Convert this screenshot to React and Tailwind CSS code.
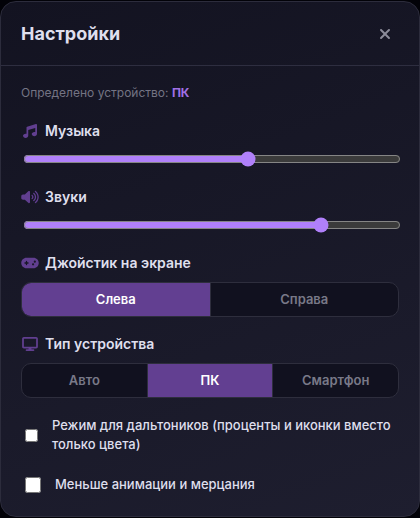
import { useState } from 'react';
import { FaMusic, FaVolumeHigh, FaGamepad, FaDisplay, FaXmark } from 'react-icons/fa6';

const JOYSTICK_SIDES = [
  { value: 'left', label: 'Слева' },
  { value: 'right', label: 'Справа' },
];

const DEVICE_TYPES = [
  { value: 'auto', label: 'Авто' },
  { value: 'pc', label: 'ПК' },
  { value: 'phone', label: 'Смартфон' },
];

function VolumeSlider({ id, icon: Icon, label, value, onChange }) {
  return (
    <div className="mb-5">
      <label htmlFor={id} className="flex items-center gap-1.5 h-5 mb-2.5 text-sm font-semibold">
        <Icon className="w-[18px] h-3.5 text-[#613f90]" />
        {label}
      </label>
      <div className="pl-0.5 -mr-0.5">
        <input
          id={id}
          type="range"
          min="0"
          max="100"
          value={value}
          onChange={(e) => onChange(Number(e.target.value))}
          className="block w-full h-4 accent-[#b080fa]"
        />
      </div>
    </div>
  );
}

function Segmented({ icon: Icon, label, options, value, onChange }) {
  return (
    <fieldset className="mb-[17px]">
      <legend className="flex items-center gap-1.5 h-5 mb-[9px] text-sm font-semibold">
        <Icon className="w-[18px] h-3.5 text-[#613f90]" />
        {label}
      </legend>
      <div className="flex rounded-[10px] border border-[#2e2e3d] bg-[#11111f] overflow-hidden">
        {options.map((option) => (
          <button
            key={option.value}
            type="button"
            aria-pressed={value === option.value}
            onClick={() => onChange(option.value)}
            className={`flex-1 h-[33px] text-[13px] font-semibold not-last:border-r border-[#2e2e3d] ${
              value === option.value ? 'bg-[#623f91] text-white' : 'text-[#797988]'
            }`}
          >
            {option.label}
          </button>
        ))}
      </div>
    </fieldset>
  );
}

export default function App() {
  const [music, setMusic] = useState(60);
  const [sounds, setSounds] = useState(80);
  const [side, setSide] = useState('left');
  const [device, setDevice] = useState('pc');
  const [colorblind, setColorblind] = useState(false);
  const [reducedMotion, setReducedMotion] = useState(false);

  return (
    <div className="min-h-screen bg-[#020208] flex flex-col py-px font-[Inter,sans-serif] text-[#dfdfed]">
      <section className="flex-1 rounded-2xl border border-[#2c2c3c] bg-linear-160 from-[#131321] to-[#1e1e2f]">
        <header className="flex items-center justify-between h-16 px-5 border-b border-[#2e2e40]">
          <h1 className="text-lg font-bold">Настройки</h1>
          <button type="button" aria-label="Закрыть" className="w-7 h-7 flex items-center justify-center text-[#8b8b99]">
            <FaXmark className="w-4 h-4" />
          </button>
        </header>

        <div className="px-5 pt-[17px]">
          <p className="mb-[18px] text-xs leading-5 text-[#747483]">
            Определено устройство: <strong className="font-bold text-[#a070e5]">ПК</strong>
          </p>

          <VolumeSlider id="music" icon={FaMusic} label="Музыка" value={music} onChange={setMusic} />
          <VolumeSlider id="sounds" icon={FaVolumeHigh} label="Звуки" value={sounds} onChange={setSounds} />

          <Segmented icon={FaGamepad} label="Джойстик на экране" options={JOYSTICK_SIDES} value={side} onChange={setSide} />
          <Segmented icon={FaDisplay} label="Тип устройства" options={DEVICE_TYPES} value={device} onChange={setDevice} />

          <label className="flex items-center gap-3.5 pl-1 py-px mb-[19px] text-[13px] leading-[19px] font-medium">
            <input
              type="checkbox"
              checked={colorblind}
              onChange={(e) => setColorblind(e.target.checked)}
              className="w-[13px] h-[13px] shrink-0"
            />
            Режим для дальтоников (проценты и иконки вместо только цвета)
          </label>
          <label className="flex items-center gap-3.5 pl-1 py-px mb-[19px] text-[13px] leading-[19px] font-medium">
            <input
              type="checkbox"
              checked={reducedMotion}
              onChange={(e) => setReducedMotion(e.target.checked)}
              className="w-4 h-4 shrink-0"
            />
            Меньше анимации и мерцания
          </label>
        </div>
      </section>
    </div>
  );
}
